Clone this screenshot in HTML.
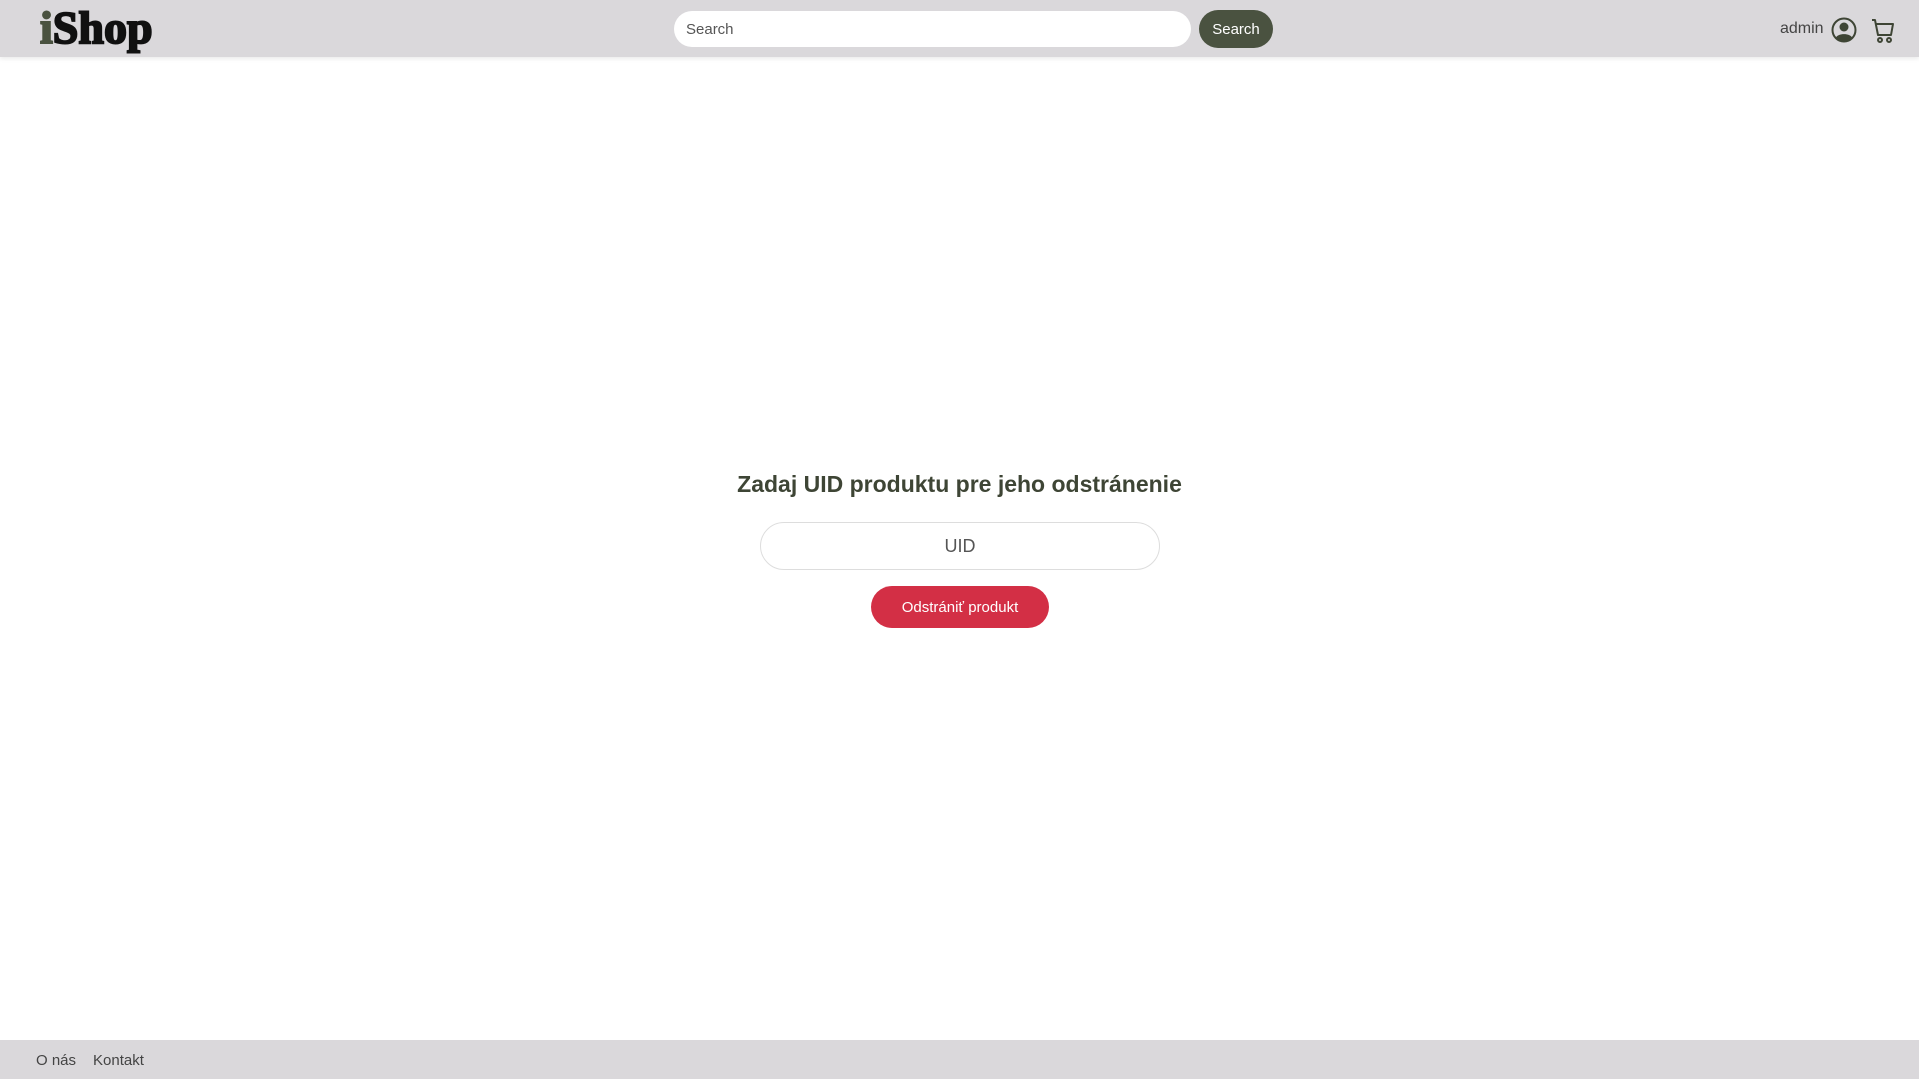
<!DOCTYPE html>
<html><head><meta charset="utf-8"><style>
body{margin:0;width:1919px;height:1079px;background:#fff;font-family:"Liberation Sans",sans-serif;position:relative;overflow:hidden}
.hdr{position:absolute;left:0;top:0;width:1919px;height:57px;background:#dad8db;box-shadow:0 2px 4px rgba(0,0,0,.08)}
.logo{position:absolute;left:40px;top:1px;font-family:"Liberation Serif",serif;font-weight:900;font-size:46px;color:#111;letter-spacing:0px;-webkit-text-stroke:2px #111}
.logo span{color:#4a5240;-webkit-text-stroke:2px #4a5240}
.sin{position:absolute;left:674px;top:11px;width:517px;height:36px;background:#fff;border-radius:18px;box-sizing:border-box;padding-left:12px;font-size:15px;line-height:38px;color:#555}
.sbtn{position:absolute;left:1199px;top:10px;width:74px;height:38px;background:#4a5240;border-radius:19px;color:#fff;font-size:15px;line-height:40px;text-align:center}
.adm{position:absolute;left:1780px;top:20px;font-size:16px;color:#444}
h1{position:absolute;left:0;width:1919px;top:471px;margin:0;text-align:center;font-size:23px;font-weight:bold;color:#3e4535}
.uid{position:absolute;left:760px;top:522px;width:400px;height:48px;border:1px solid #ddd;border-radius:24px;box-sizing:border-box;text-align:center;line-height:46px;font-size:18px;color:#555}
.del{position:absolute;left:871px;top:586px;width:178px;height:42px;background:#d32f45;border-radius:21px;color:#fff;text-align:center;line-height:43px;font-size:15px}
.ftr{position:absolute;left:0;top:1040px;width:1919px;height:39px;background:#dad8db;font-size:15px;color:#444;line-height:41px}
</style></head><body>
<div class="hdr">
<div class="logo"><span>i</span>Shop</div>
<div class="sin">Search</div>
<div class="sbtn">Search</div>
<div class="adm">admin</div>
<svg style="position:absolute;left:1831px;top:17px" width="26" height="26" viewBox="0 0 26 26"><circle cx="13" cy="13" r="11.5" fill="none" stroke="#3e4535" stroke-width="2"/><circle cx="13" cy="10" r="4.5" fill="#3e4535"/><path d="M5 20.5C7 16 19 16 21 20.5A11 11 0 0 1 5 20.5Z" fill="#3e4535"/></svg>
<svg style="position:absolute;left:1871px;top:18px" width="26" height="26" viewBox="0 0 26 26" fill="none" stroke="#3e4535" stroke-width="2" stroke-linejoin="round"><path d="M1 2h3l3 15h13l2-11H5.5"/><circle cx="9" cy="22" r="2"/><circle cx="18" cy="22" r="2"/></svg>
</div>
<h1>Zadaj UID produktu pre jeho odstránenie</h1>
<div class="uid">UID</div>
<div class="del">Odstrániť produkt</div>
<div class="ftr"><span style="position:absolute;left:36px">O nás</span><span style="position:absolute;left:93px">Kontakt</span></div>
</body></html>
